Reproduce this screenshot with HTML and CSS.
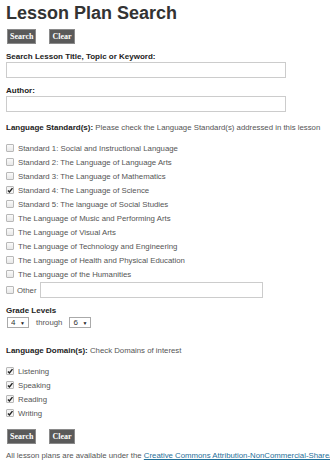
FILE: index.html
```html
<!DOCTYPE html>
<html lang="en">
<head>
  <meta charset="UTF-8" />
  <meta name="viewport" content="width=device-width, initial-scale=1.0"/>
  <title>Lesson Plan Search</title>
  <link rel="stylesheet" href="styles.css">
</head>
<body>
  <h1 class="page-title">Lesson Plan Search</h1>
  <div class="btn-row">
    <button class="btn">Search</button>
    <button class="btn">Clear</button>
  </div>

  <label class="field-label" for="keyword">Search Lesson Title, Topic or Keyword:</label>
  <input class="text-input" type="text" id="keyword" />

  <label class="field-label" for="author">Author:</label>
  <input class="text-input" type="text" id="author" />

  <p class="section-head"><b>Language Standard(s):</b> Please check the Language Standard(s) addressed in this lesson</p>
  <div class="check-list">
    <label class="check-row"><input type="checkbox" /> Standard 1: Social and Instructional Language</label>
    <label class="check-row"><input type="checkbox" /> Standard 2: The Language of Language Arts</label>
    <label class="check-row"><input type="checkbox" /> Standard 3: The Language of Mathematics</label>
    <label class="check-row"><input type="checkbox" checked /> Standard 4: The Language of Science</label>
    <label class="check-row"><input type="checkbox" /> Standard 5: The language of Social Studies</label>
    <label class="check-row"><input type="checkbox" /> The Language of Music and Performing Arts</label>
    <label class="check-row"><input type="checkbox" /> The Language of Visual Arts</label>
    <label class="check-row"><input type="checkbox" /> The Language of Technology and Engineering</label>
    <label class="check-row"><input type="checkbox" /> The Language of Health and Physical Education</label>
    <label class="check-row"><input type="checkbox" /> The Language of the Humanities</label>
    <div class="check-row other-row">
      <input type="checkbox" id="other" /> <label for="other">Other</label>
      <input class="other-input" type="text" />
    </div>
  </div>

  <p class="field-label grade-head">Grade Levels</p>
  <div class="grade-row">
    <span class="select-wrap">
      <select class="grade-select">
        <option>K</option><option>1</option><option>2</option><option>3</option>
        <option selected>4</option><option>5</option><option>6</option>
      </select>
    </span>
    <span>through</span>
    <span class="select-wrap">
      <select class="grade-select">
        <option>K</option><option>1</option><option>2</option><option>3</option>
        <option>4</option><option>5</option><option selected>6</option>
      </select>
    </span>
  </div>

  <p class="section-head domain-head"><b>Language Domain(s):</b> Check Domains of interest</p>
  <div class="check-list">
    <label class="check-row"><input type="checkbox" checked /> Listening</label>
    <label class="check-row"><input type="checkbox" checked /> Speaking</label>
    <label class="check-row"><input type="checkbox" checked /> Reading</label>
    <label class="check-row"><input type="checkbox" checked /> Writing</label>
  </div>

  <div class="btn-row bottom-btns">
    <button class="btn">Search</button>
    <button class="btn">Clear</button>
  </div>

  <p class="license">All lesson plans are available under the <a href="#">Creative Commons Attribution-NonCommercial-ShareAlike 3.0 Unported License</a>.</p>
</body>
</html>
```

FILE: styles.css
```css
body {
  font-family: "Liberation Sans", Arial, sans-serif;
  font-size: 7.8px;
  color: #555;
  margin: 0;
  padding: 0 6px;
  overflow: hidden;
}

p {
  margin: 0;
}

.page-title {
  margin: 0;
  padding-top: 3px;
  font-size: 18px;
  line-height: 20px;
  color: #333;
}

.btn-row {
  display: flex;
  gap: 13px;
  margin-top: 6px;
  padding-left: 1px;
}

.btn {
  height: 15px;
  padding: 0 2px;
  background: #5a5a5a;
  border: 1px solid #8a8a8a;
  color: #fff;
  font: bold 8px "Liberation Serif", serif;
  cursor: pointer;
}

.field-label {
  display: block;
  margin-top: 8px;
  font-size: 8px;
  font-weight: bold;
  line-height: 10px;
  color: #222;
}

.text-input {
  display: block;
  width: 280px;
  height: 16px;
  box-sizing: border-box;
  margin: 0;
  padding: 0 3px;
  border: 1px solid #ccc;
}

.section-head {
  margin-top: 11px;
  line-height: 10px;
  white-space: nowrap;
}

.section-head b {
  font-size: 8px;
  color: #222;
}

.check-list {
  margin-top: 8px;
}

.check-row {
  display: flex;
  align-items: center;
  gap: 4px;
  height: 14px;
}

.check-row input[type="checkbox"] {
  appearance: none;
  width: 8px;
  height: 8px;
  margin: 0;
  border: 1px solid #b8b8b8;
  border-radius: 1px;
  background: linear-gradient(#fafafa, #e8e8e8);
  flex: none;
}

.check-row input[type="checkbox"]:checked {
  background: #f4f4f4 url("data:image/svg+xml,%3Csvg xmlns='http://www.w3.org/2000/svg' viewBox='0 0 8 8'%3E%3Cpath d='M1.6 4.2 3.2 5.9 6.4 1.8' fill='none' stroke='%23222' stroke-width='1.5'/%3E%3C/svg%3E") center / 7px 7px no-repeat;
}

.other-row {
  height: 16px;
  margin-top: 1px;
  gap: 3px;
}

.other-input {
  width: 223px;
  height: 16px;
  box-sizing: border-box;
  margin: 0;
  border: 1px solid #ccc;
}

.grade-head {
  margin-top: 8px;
}

.grade-row {
  display: flex;
  align-items: center;
  gap: 7px;
  margin-top: 1px;
  padding-left: 1px;
}

.select-wrap {
  position: relative;
  display: inline-block;
}

.select-wrap::after {
  content: "\25BC";
  position: absolute;
  right: 4px;
  top: 3px;
  font-size: 5px;
  color: #222;
  pointer-events: none;
}

.grade-select {
  appearance: none;
  width: 22px;
  height: 11px;
  margin: 0;
  padding: 0 0 0 3px;
  border: 1px solid #aaa;
  border-radius: 0;
  background: #fff;
  font: 8px "Liberation Sans", Arial, sans-serif;
  color: #333;
}

.domain-head {
  margin-top: 18px;
}

.bottom-btns {
  margin-top: 9px;
}

.license {
  margin-top: 7px;
  line-height: 10px;
  white-space: nowrap;
}

.license a {
  color: #1f6f99;
}
```
